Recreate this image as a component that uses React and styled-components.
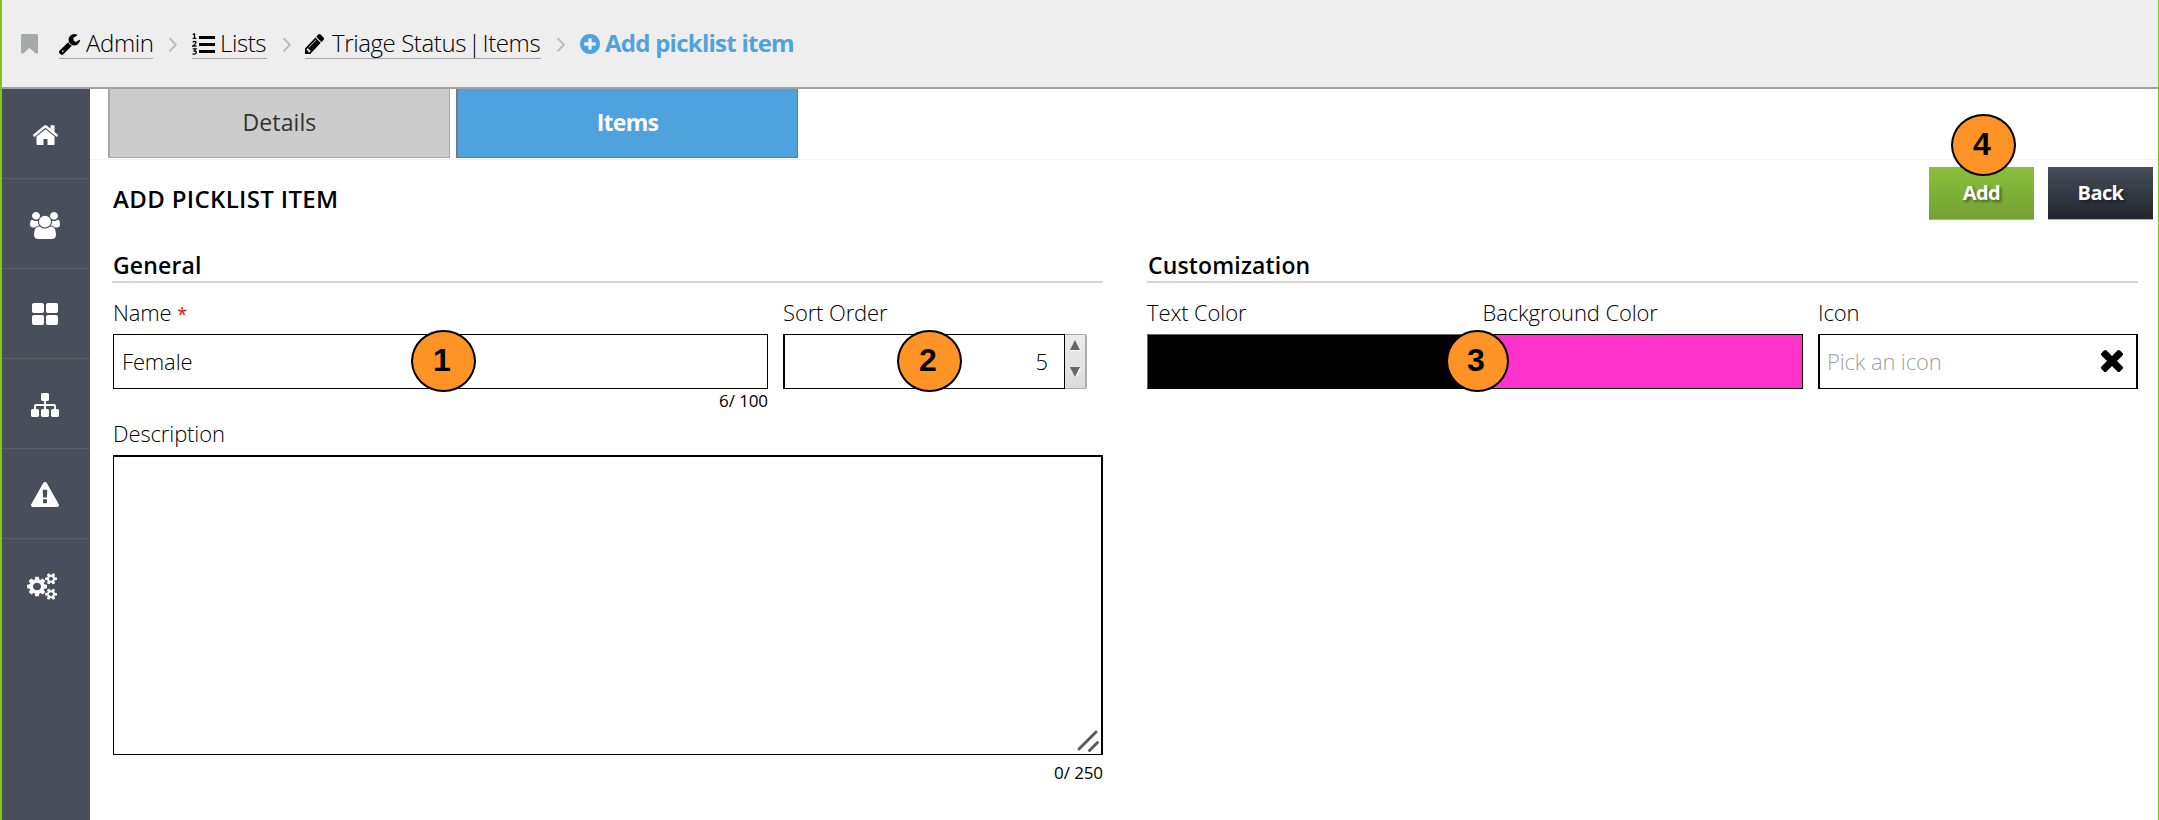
import React from "react";
import styled, { createGlobalStyle } from "styled-components";

const Global = createGlobalStyle`
  *, *::before, *::after { box-sizing: border-box; }
  body { margin: 0; background: #fff; color: #000; font-family: "Open Sans", "Noto Sans", sans-serif; font-weight: 300; }
`;

const PATHS = {
  bookmark: "M1420 128q23 0 44 9 33 13 52.5 41t19.5 62v1289q0 34-19.5 62t-52.5 41q-19 8-44 8-48 0-83-32l-441-424-441 424q-36 33-83 33-23 0-44-9-33-13-52.5-41t-19.5-62v-1289q0-34 19.5-62t52.5-41q21-9 44-9h1048z",
  wrench: "M448 1472q0-26-19-45t-45-19-45 19-19 45 19 45 45 19 45-19 19-45zm644-420l-682 682q-37 37-90 37-52 0-91-37l-106-108q-38-36-38-90 0-53 38-91l681-681q39 98 114.5 173.5t173.5 114.5zm634-435q0 39-23 106-47 134-164.5 217.5t-258.5 83.5q-185 0-316.5-131.5t-131.5-316.5 131.5-316.5 316.5-131.5q58 0 121.5 16.5t107.5 46.5q16 11 16 28t-16 28l-293 169v224l193 107q5-3 79-48.5t135.5-81 70.5-35.5q15 0 23.5 10t8.5 25z",
  pencil: "M491 1536l91-91-235-235-91 91v107h128v128h107zm523-928q0-22-22-22-10 0-17 7l-542 542q-7 7-7 17 0 22 22 22 10 0 17-7l542-542q7-7 7-17zm-54-192l416 416-832 832h-416v-416zm683 96q0 53-37 90l-166 166-416-416 166-165q36-38 90-38 53 0 91 38l235 234q37 39 37 91z",
  plus: "M1344 960v-128q0-26-19-45t-45-19h-256v-256q0-26-19-45t-45-19h-128q-26 0-45 19t-19 45v256h-256q-26 0-45 19t-19 45v128q0 26 19 45t45 19h256v256q0 26 19 45t45 19h128q26 0 45-19t19-45v-256h256q26 0 45-19t19-45zm320-64q0 209-103 385.5t-279.5 279.5-385.5 103-385.5-103-279.5-279.5-103-385.5 103-385.5 279.5-279.5 385.5-103 385.5 103 279.5 279.5 103 385.5z",
  angle: "M1171 960q0 13-10 23l-466 466q-10 10-23 10t-23-10l-50-50q-10-10-10-23t10-23l393-393-393-393q-10-10-10-23t10-23l50-50q10-10 23-10t23 10l466 466q10 10 10 23z",
  times: "M1490 1322q0 40-28 68l-136 136q-28 28-68 28t-68-28l-294-294-294 294q-28 28-68 28t-68-28l-136-136q-28-28-28-68t28-68l294-294-294-294q-28-28-28-68t28-68l136-136q28-28 68-28t68 28l294 294 294-294q28-28 68-28t68 28l136 136q28 28 28 68t-28 68l-294 294 294 294q28 28 28 68z",
  home: "M1472 992v480q0 26-19 45t-45 19h-384v-384h-256v384h-384q-26 0-45-19t-19-45v-480q0-1 .5-3t.5-3l575-474 575 474q1 2 1 6zm223-69l-62 74q-8 9-21 11h-3q-13 0-21-7l-692-577-692 577q-12 8-24 7-13-2-21-11l-62-74q-8-10-7-23.5t11-21.5l719-599q32-26 76-26t76 26l244 204v-195q0-14 9-23t23-9h192q14 0 23 9t9 23v408l219 182q10 8 11 21.5t-7 23.5z",
  users: "M593 896q-162 5-265 128h-134q-82 0-138-40.5t-56-118.5q0-353 124-353 6 0 43.5 21t97.5 42.5 119 21.5q67 0 133-23-5 37-5 66 0 139 81 256zm1071 637q0 120-73 189.5t-194 69.5h-874q-121 0-194-69.5t-73-189.5q0-53 3.5-103.5t14-109 26.5-108.5 43-97.5 62-81 85.5-53.5 111.5-20q10 0 43 21.5t73 48 107 48 135 21.5 135-21.5 107-48 73-48 43-21.5q61 0 111.5 20t85.5 53.5 62 81 43 97.5 26.5 108.5 14 109 3.5 103.5zm-1024-1277q0 106-75 181t-181 75-181-75-75-181 75-181 181-75 181 75 75 181zm704 384q0 159-112.5 271.5t-271.5 112.5-271.5-112.5-112.5-271.5 112.5-271.5 271.5-112.5 271.5 112.5 112.5 271.5zm576 225q0 78-56 118.5t-138 40.5h-134q-103-123-265-128 81-117 81-256 0-29-5-66 66 23 133 23 59 0 119-21.5t97.5-42.5 43.5-21q124 0 124 353zm-128-609q0 106-75 181t-181 75-181-75-75-181 75-181 181-75 181 75 75 181z",
  grid: "M832 1024v384q0 52-38 90t-90 38h-512q-52 0-90-38t-38-90v-384q0-52 38-90t90-38h512q52 0 90 38t38 90zm0-768v384q0 52-38 90t-90 38h-512q-52 0-90-38t-38-90v-384q0-52 38-90t90-38h512q52 0 90 38t38 90zm896 768v384q0 52-38 90t-90 38h-512q-52 0-90-38t-38-90v-384q0-52 38-90t90-38h512q52 0 90 38t38 90zm0-768v384q0 52-38 90t-90 38h-512q-52 0-90-38t-38-90v-384q0-52 38-90t90-38h512q52 0 90 38t38 90z",
  sitemap: "M1792 1248v320q0 40-28 68t-68 28h-320q-40 0-68-28t-28-68v-320q0-40 28-68t68-28h96v-192h-512v192h96q40 0 68 28t28 68v320q0 40-28 68t-68 28h-320q-40 0-68-28t-28-68v-320q0-40 28-68t68-28h96v-192h-512v192h96q40 0 68 28t28 68v320q0 40-28 68t-68 28h-320q-40 0-68-28t-28-68v-320q0-40 28-68t68-28h96v-192q0-52 38-90t90-38h512v-192h-96q-40 0-68-28t-28-68v-320q0-40 28-68t68-28h320q40 0 68 28t28 68v320q0 40-28 68t-68 28h-96v192h512q52 0 90 38t38 90v192h96q40 0 68 28t28 68z",
  warning: "M1024 1375v-190q0-14-9.5-23.5t-22.5-9.5h-192q-13 0-22.5 9.5t-9.5 23.5v190q0 14 9.5 23.5t22.5 9.5h192q13 0 22.5-9.5t9.5-23.5zm-2-374l18-459q0-12-10-19-13-11-24-11h-220q-11 0-24 11-10 7-10 21l17 457q0 10 10 16.5t24 6.5h185q14 0 23.5-6.5t10.5-16.5zm-14-934l768 1408q35 63-2 126-17 29-46.5 46t-63.5 17h-1536q-34 0-63.5-17t-46.5-46q-37-63-2-126l768-1408q17-31 47-49t65-18 65 18 47 49z",
  cogs: "M896 896q0-106-75-181t-181-75-181 75-75 181 75 181 181 75 181-75 75-181zm768 512q0-52-38-90t-90-38-90 38-38 90q0 53 37.5 90.5t90.5 37.5 90.5-37.5 37.5-90.5zm0-1024q0-52-38-90t-90-38-90 38-38 90q0 53 37.5 90.5t90.5 37.5 90.5-37.5 37.5-90.5zm-384 421v185q0 10-7 19.5t-16 10.5l-155 24q-11 35-32 76 34 48 90 115 7 11 7 20 0 12-7 19-23 30-82.5 89.5t-78.5 59.5q-11 0-21-7l-115-90q-37 19-77 31-11 108-23 155-7 24-30 24h-186q-11 0-20-7.5t-10-17.5l-23-153q-34-10-75-31l-118 89q-7 7-20 7-11 0-21-8-144-133-144-160 0-9 7-19 10-14 41-53t47-61q-23-44-35-82l-152-24q-10-1-17-9.5t-7-19.5v-185q0-10 7-19.5t16-10.5l155-24q11-35 32-76-34-48-90-115-7-11-7-20 0-12 7-20 22-30 82-89t79-59q11 0 21 7l115 90q34-18 77-32 11-108 23-154 7-24 30-24h186q11 0 20 7.5t10 17.5l23 153q34 10 75 31l118-89q8-7 20-7 11 0 21 8 144 133 144 160 0 8-7 19-12 16-42 54t-45 60q23 48 34 82l152 23q10 2 17 10.5t7 19.5zm640 533v140q0 16-149 31-12 27-30 52 51 113 51 138 0 4-4 7-122 71-124 71-8 0-46-47t-52-68q-20 2-30 2t-30-2q-14 21-52 68t-46 47q-2 0-124-71-4-3-4-7 0-25 51-138-18-25-30-52-149-15-149-31v-140q0-16 149-31 13-29 30-52-51-113-51-138 0-4 4-7 4-2 35-20t59-34 30-16q8 0 46 46.5t52 67.5q20-2 30-2t30 2q51-71 92-112l6-2q4 0 124 70 4 3 4 7 0 25-51 138 17 23 30 52 149 15 149 31zm0-1024v140q0 16-149 31-12 27-30 52 51 113 51 138 0 4-4 7-122 71-124 71-8 0-46-47t-52-68q-20 2-30 2t-30-2q-14 21-52 68t-46 47q-2 0-124-71-4-3-4-7 0-25 51-138-18-25-30-52-149-15-149-31v-140q0-16 149-31 13-29 30-52-51-113-51-138 0-4 4-7 4-2 35-20t59-34 30-16q8 0 46 46.5t52 67.5q20-2 30-2t30 2q51-71 92-112l6-2q4 0 124 70 4 3 4 7 0 25-51 138 17 23 30 52 149 15 149 31z",
};

/* box: the part of the path's grid that is drawn, as "x y width height" */
const Svg = styled.svg`
  display: block;
  flex: none;
  width: ${(p) => p.$w}px;
  height: ${(p) => p.$h}px;
  fill: ${(p) => p.$color || "currentColor"};
`;
const Icon = ({ name, box, w, h, color }) => (
  <Svg viewBox={box} preserveAspectRatio="none" $w={w} $h={h} $color={color} aria-hidden="true">
    <path d={PATHS[name]} />
  </Svg>
);
const ListIcon = () => (
  <Svg viewBox="0 0 23 22" $w={23} $h={22} aria-hidden="true">
    <path d="M7 3h16v3H7zM7 10h16v3H7zM7 17h16v3H7z" />
    <path fill="none" stroke="#000" strokeWidth="1.3" d="M.8 1.6 2.5.8V5.4M.6 5.4H4.4M.7 9.4Q2.4 7.6 3.9 9 4.4 10.2.8 13H4.6M.7 15.8H4L2.3 18Q4.6 18.1 4.3 19.8 3.4 21.8.5 20.9" />
  </Svg>
);

const Page = styled.div`
  width: 2159px;
  height: 820px;
  display: flex;
  flex-direction: column;
  border-left: 2px solid #80c41c;
  border-right: 1px solid #80c41c;
  overflow: hidden;
  background: #fff;
`;
const Header = styled.header`
  height: 89px;
  flex: none;
  display: flex;
  align-items: flex-start;
  padding: 30px 0 0 19px;
  background: #eee;
  border-bottom: 2px solid #aaa;
  border-image: linear-gradient(#c4c4c4, #a0a0a0) 2;
`;
const Bookmark = styled.span`
  padding: 4px 21px 0 0;
`;
const Crumb = styled.a`
  height: 29px;
  width: ${(p) => (p.$w ? `${p.$w}px` : "auto")};
  display: flex;
  align-items: flex-start;
  gap: ${(p) => p.$gap}px;
  color: ${(p) => (p.$current ? "#4ea2de" : "#000")};
  font-weight: ${(p) => (p.$current ? 700 : 300)};
  font-size: 24px;
  line-height: 25px;
  letter-spacing: ${(p) => (p.$current ? -0.75 : -0.4)}px;
  white-space: nowrap;
  border-bottom: ${(p) => (p.$current ? "0" : "1px solid #a5a5a5")};
  > svg { margin-top: ${(p) => p.$top ?? 4}px; }
`;
const Pipe = styled.span`
  margin: 0 ${(p) => p.$m || 2}px;
`;
const Separator = styled.span`
  width: ${(p) => p.$w}px;
  padding: 8px 0 0 16px;
`;
const Body = styled.div`
  flex: 1;
  display: flex;
`;
const Sidebar = styled.nav`
  width: 88px;
  flex: none;
  background: #484f5a;
`;
const SideItem = styled.a`
  height: 90px;
  display: flex;
  align-items: center;
  justify-content: center;
  color: #fff;
  padding: ${(p) => p.$pad || "0 2px 0 0"};
  border-bottom: ${(p) => (p.$last ? "0" : "1px solid #5d5f63")};
`;
const Main = styled.main`
  flex: 1;
`;
const Tabs = styled.div`
  height: 71px;
  display: flex;
  gap: 6px;
  padding-left: 18px;
  border-bottom: 1px solid #f2f2f2;
`;
const Tab = styled.button`
  width: 342px;
  height: 69px;
  padding: 0 0 2px;
  border: 1px solid ${(p) => (p.$active ? "#74797d" : "#a8a8a8")};
  border-left-width: 2px;
  border-top: 0;
  background: ${(p) => (p.$active ? "#4ea2de" : "#ccc")};
  color: ${(p) => (p.$active ? "#fff" : "#333")};
  font: ${(p) => (p.$active ? 700 : 400)} 23px "Open Sans", sans-serif;
  letter-spacing: ${(p) => (p.$active ? -0.7 : 0.1)}px;
`;
const TitleRow = styled.div`
  height: 84px;
  display: flex;
  justify-content: space-between;
  padding: 7px 5px 0 22px;
`;
const Title = styled.h1`
  margin: 16px 0 0;
  padding-left: 1px;
  font-size: 24px;
  line-height: 32px;
  font-weight: 600;
  letter-spacing: 0.35px;
`;
const Actions = styled.div`
  display: flex;
  gap: 14px;
`;
const Action = styled.button`
  position: relative;
  width: 105px;
  height: 53px;
  padding: 0 0 1px;
  border: 0;
  border-bottom: 1px solid #a9b1a2;
  color: #fff;
  font: 700 20px "Open Sans", sans-serif;
  letter-spacing: -0.6px;
  text-shadow: 2px 2px 3px rgba(0, 0, 0, 0.45);
  background: ${(p) => (p.$primary ? "linear-gradient(#88c03a, #75a035)" : "linear-gradient(#474f5a, #21252d)")};
`;
const Form = styled.div`
  display: grid;
  grid-template-columns: 991px 991px;
  column-gap: 44px;
  padding-left: 22px;
`;
const SectionTitle = styled.h2`
  height: 39px;
  margin: 0;
  padding-left: 1px;
  font-size: 23px;
  line-height: 42px;
  font-weight: 600;
  letter-spacing: 0.15px;
  border-bottom: 2px solid #d4d4d4;
`;
const Row = styled.div`
  display: grid;
  grid-template-columns: ${(p) => p.$cols};
  column-gap: ${(p) => p.$gap || 15}px;
  padding-left: ${(p) => p.$pad || 0}px;
`;
const Field = styled.div`
  position: relative;
`;
const Label = styled.label`
  display: block;
  height: ${(p) => p.$h || 51}px;
  padding-top: ${(p) => p.$top ?? 13}px;
  font-size: 22px;
  line-height: 32px;
  letter-spacing: -0.12px;
`;
const ShiftedLabel = styled(Label)`
  margin-top: -3px;
  height: 38px;
`;
const Required = styled.span`
  color: red;
  font-weight: 400;
  font-size: 18px;
`;
const Control = styled.div`
  height: 55px;
  display: flex;
  align-items: center;
  justify-content: ${(p) => p.$justify || "flex-start"};
  padding: ${(p) => p.$pad || "0 8px 2px"};
  border: solid #000;
  border-color: ${(p) => p.$bc || "#000"};
  border-width: ${(p) => p.$bw || "1px"};
  background: ${(p) => p.$bg || "#fff"};
  color: ${(p) => p.$color || "#000"};
  font-size: 22px;
  letter-spacing: -0.15px;
`;
const SpinWrap = styled.div`
  display: grid;
  grid-template-columns: 282px 22px;
`;
const Spinner = styled.div`
  height: 55px;
  display: flex;
  flex-direction: column;
  align-items: center;
  gap: 17px;
  padding: 5px 0 0;
  border: 1px solid #aaa;
  border-left: 0;
  border-right-width: 2px;
  border-radius: 0 2px 2px 0;
  background: linear-gradient(#ebebeb, #dcdcdc);
`;
const Arrow = styled.svg`
  width: 10px;
  height: 10px;
  fill: #666;
  overflow: visible;
  filter: drop-shadow(1px 1px 0 #fff);
`;
const Counter = styled.div`
  height: 31px;
  font-size: 17px;
  line-height: 23px;
  font-weight: 400;
  text-align: right;
  letter-spacing: -0.1px;
  padding-top: ${(p) => p.$top || 0}px;
`;
const TextArea = styled.div`
  height: 300px;
  display: flex;
  align-items: flex-end;
  justify-content: flex-end;
  padding: 0 2px 2px 0;
  border: solid #000;
  border-width: 2px 2px 1px 1px;
`;
const Grip = styled.svg`
  width: 22px;
  height: 22px;
  stroke: #5a5a5a;
  stroke-width: 2.9;
  stroke-linecap: round;
`;
/* Step marker laid over the form */
const Marker = styled.span`
  position: absolute;
  z-index: 2;
  left: ${(p) => p.$x}px;
  top: ${(p) => p.$y}px;
  width: ${(p) => p.$w || 65}px;
  height: 62px;
  display: flex;
  align-items: center;
  justify-content: center;
  padding: 0 3px 2px 0;
  border: 2px solid #000;
  border-radius: 50%;
  background: #ff9326;
  color: #000;
  font: 700 32px "Liberation Sans", Arial, sans-serif;
  letter-spacing: 0;
  text-shadow: none;
`;

const SIDE = [
  { name: "home", box: "32 243 1664 1293", w: 26, h: 20, pad: "3px 2px 0 0" },
  { name: "users", box: "0 0 1920 1792", w: 30, h: 27, pad: "3px 2px 0 0" },
  { name: "grid", box: "64 128 1664 1408", w: 26, h: 22 },
  { name: "sitemap", box: "0 128 1792 1536", w: 28, h: 24, pad: "2px 2px 0 0" },
  { name: "warning", box: "0 0 1792 1664", w: 28, h: 25, pad: "2px 2px 0 0" },
  { name: "cogs", box: "0 0 1920 1792", w: 30, h: 27, pad: "4px 8px 0 0", last: true },
];

const Chevron = ({ w }) => (
  <Separator $w={w}>
    <Icon name="angle" box="589 494 582 965" w={8} h={14} color="#bbb" />
  </Separator>
);

export default function App() {
  return (
    <>
      <Global />
      <Page>
        <Header>
          <Bookmark><Icon name="bookmark" box="256 128 1280 1536" w={17} h={20} color="#a6a8ab" /></Bookmark>
          <Crumb $w={94} $gap={6}>
            <Icon name="wrench" box="85 128 1641 1643" w={21} h={21} />Admin
          </Crumb>
          <Chevron w={39} />
          <Crumb $w={75} $gap={5} $top={3}><ListIcon />Lists</Crumb>
          <Chevron w={38} />
          <Crumb $w={236} $gap={8}>
            <Icon name="pencil" box="128 150 1515 1514" w={19} h={20} />
            <span>Triage Status<Pipe>|</Pipe>Items</span>
          </Crumb>
          <Chevron w={39} />
          <Crumb $gap={5} $current>
            <Icon name="plus" box="128 128 1536 1536" w={20} h={20} />Add picklist item
          </Crumb>
        </Header>
        <Body>
          <Sidebar>
            {SIDE.map((s) => (
              <SideItem key={s.name} $pad={s.pad} $last={s.last}><Icon {...s} /></SideItem>
            ))}
          </Sidebar>
          <Main>
            <Tabs>
              <Tab>Details</Tab>
              <Tab $active>Items</Tab>
            </Tabs>
            <TitleRow>
              <Title>ADD PICKLIST ITEM</Title>
              <Actions>
                <Action $primary>Add<Marker $x={22} $y={-53}>4</Marker></Action>
                <Action>Back</Action>
              </Actions>
            </TitleRow>
            <Form>
              <section>
                <SectionTitle>General</SectionTitle>
                <Row $cols="655px 304px" $pad={1}>
                  <Field>
                    <Label>Name <Required>*</Required></Label>
                    <Control>Female</Control>
                    <Marker $x={298} $y={47}>1</Marker>
                    <Counter>6/ 100</Counter>
                  </Field>
                  <Field>
                    <Label>Sort Order</Label>
                    <SpinWrap>
                      <Control $justify="flex-end" $pad="0 16px 2px" $bw="1px 1px 1px 2px">5</Control>
                      <Spinner>
                        <Arrow viewBox="0 0 10 10"><path d="M0 10 5 0l5 10z" /></Arrow>
                        <Arrow viewBox="0 0 10 10"><path d="M0 0h10L5 10z" /></Arrow>
                      </Spinner>
                    </SpinWrap>
                    <Marker $x={114} $y={47}>2</Marker>
                  </Field>
                </Row>
                <Row $cols="990px" $pad={1}>
                  <Field>
                    <ShiftedLabel $top={0}>Description</ShiftedLabel>
                    <TextArea>
                      <Grip viewBox="0 0 22 22"><path d="M2 19 19 2M12.500 20.500l8-8" /></Grip>
                    </TextArea>
                    <Counter $top={6}>0/ 250</Counter>
                  </Field>
                </Row>
              </section>
              <section>
                <SectionTitle>Customization</SectionTitle>
                <Row $cols="320px 320px 320px" $gap={15.5}>
                  <Field>
                    <Label>Text Color</Label>
                    <Control $bg="#000" $bc="#666 #000 #000 #666" />
                    <Marker $x={299} $y={47} $w={63}>3</Marker>
                  </Field>
                  <Field>
                    <Label>Background Color</Label>
                    <Control $bg="#ff33cc" />
                  </Field>
                  <Field>
                    <Label>Icon</Label>
                    <Control $justify="space-between" $pad="0 13px 2px 7px" $bw="1px 2px" $color="#a0a0a0">
                      Pick an icon
                      <Icon name="times" box="302 366 1188 1188" w={22} h={22} color="#000" />
                    </Control>
                  </Field>
                </Row>
              </section>
            </Form>
          </Main>
        </Body>
      </Page>
    </>
  );
}
